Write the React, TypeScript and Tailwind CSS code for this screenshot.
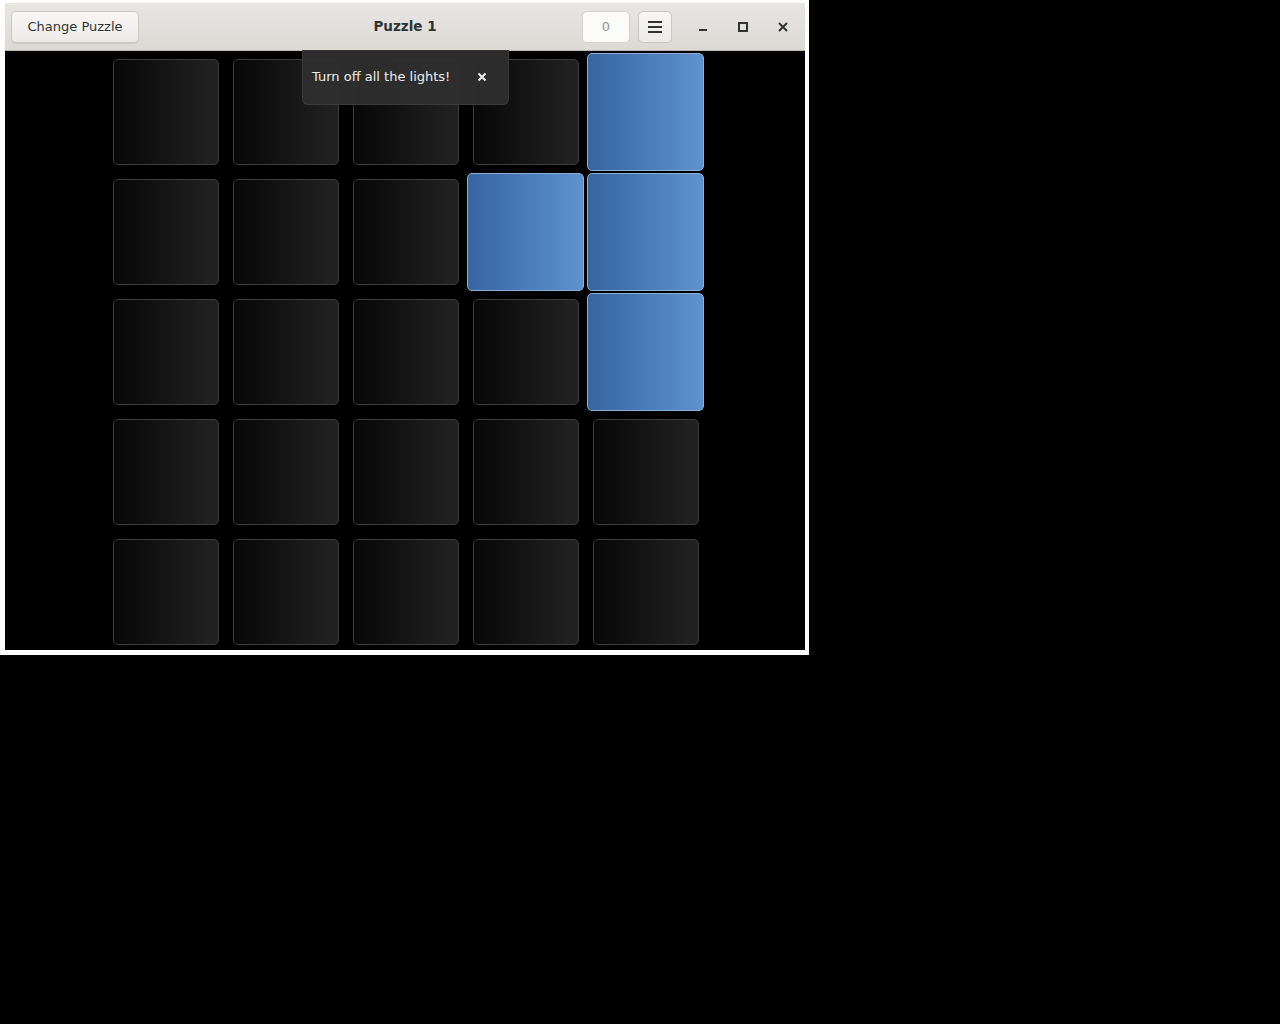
import React from "react";

const lit = new Set(["0-4", "1-3", "1-4", "2-4"]);

function Cell({ on }: { on: boolean }) {
  return (
    <div className="w-[120px] h-[120px] flex items-center justify-center">
      {on ? (
        <div className="w-[117px] h-[118px] rounded-[5px] border border-[#8db0da] bg-gradient-to-r from-[#3765a0] to-[#5e93cd] -translate-x-[1px]" />
      ) : (
        <div className="w-[106px] h-[106px] rounded-[5px] border border-[#3c3c3c] bg-gradient-to-r from-[#080808] to-[#222222]" />
      )}
    </div>
  );
}

export default function App() {
  return (
    <div className="min-h-[1024px] w-[1280px] bg-black" style={{ fontFamily: '"DejaVu Sans", sans-serif' }}>
      <div className="w-[809px] h-[655px] bg-white pt-[3px] pl-[5px] pr-[4px] pb-[5px]">
        <div className="relative w-[800px] h-[647px] flex flex-col overflow-hidden">
          {/* header */}
          <div className="relative shrink-0 h-[48px] flex items-center pl-[6px] pr-[2px] bg-gradient-to-b from-[#e8e6e3] to-[#dcd9d5] border-b border-[#bfb8b1]">
            <button className="h-[32px] w-[128px] rounded-[5px] border border-[#cdc7c2] bg-gradient-to-b from-[#f8f7f6] to-[#edebe9] text-[13px] text-[#2e3436] shadow-[0_1px_0_rgba(0,0,0,0.07)]">
              Change Puzzle
            </button>
            <div className="absolute left-0 right-0 top-0 bottom-0 flex items-center justify-center pointer-events-none">
              <span className="font-bold text-[13.5px] text-[#2e3436]">Puzzle 1</span>
            </div>
            <div className="flex-1" />
            <div className="w-[48px] h-[32px] rounded-[5px] border border-[#d6d1cd] bg-[#fbfbfa] flex items-center justify-center text-[13px] text-[#929595]">
              0
            </div>
            <button className="ml-[8px] w-[34px] h-[32px] rounded-[5px] border border-[#cdc7c2] bg-gradient-to-b from-[#f8f7f6] to-[#edebe9] flex items-center justify-center">
              <svg width="16" height="16" viewBox="0 0 16 16">
                <rect x="1" y="2" width="14" height="2" fill="#2e3436" />
                <rect x="1" y="7" width="14" height="2" fill="#2e3436" />
                <rect x="1" y="12" width="14" height="2" fill="#2e3436" />
              </svg>
            </button>
            <div className="ml-[11px] flex items-center">
              <div className="w-[40px] h-[32px] flex items-center justify-center">
                <svg width="16" height="16" viewBox="0 0 16 16">
                  <rect x="4" y="10" width="8" height="2" fill="#2e3436" />
                </svg>
              </div>
              <div className="w-[40px] h-[32px] flex items-center justify-center">
                <svg width="16" height="16" viewBox="0 0 16 16">
                  <rect x="4" y="4" width="8" height="8" fill="none" stroke="#2e3436" strokeWidth="2" />
                </svg>
              </div>
              <div className="w-[40px] h-[32px] flex items-center justify-center">
                <svg width="16" height="16" viewBox="0 0 16 16">
                  <path d="M4 4 L12 12 M12 4 L4 12" stroke="#2e3436" strokeWidth="2" />
                </svg>
              </div>
            </div>
          </div>
          {/* content */}
          <div className="flex-1 bg-black flex justify-center">
            <div className="grid grid-cols-5 w-[600px] h-[600px] mt-[1px] ml-[2px]">
              {Array.from({ length: 25 }).map((_, i) => {
                const r = Math.floor(i / 5);
                const c = i % 5;
                return <Cell key={i} on={lit.has(`${r}-${c}`)} />;
              })}
            </div>
          </div>
          {/* toast */}
          <div className="absolute left-[297px] top-[47px] w-[207px] h-[55px] rounded-b-[6px] bg-[rgba(46,46,46,0.95)] border border-t-0 border-[#3a3a3a] flex items-center pl-[9px] pr-[20px]">
            <span className="text-[13px] text-[#eeeeec] flex-1">Turn off all the lights!</span>
            <svg width="12" height="12" viewBox="0 0 12 12">
              <path d="M2.5 2.5 L9.5 9.5 M9.5 2.5 L2.5 9.5" stroke="#eeeeec" strokeWidth="2" />
            </svg>
          </div>
        </div>
      </div>
    </div>
  );
}
